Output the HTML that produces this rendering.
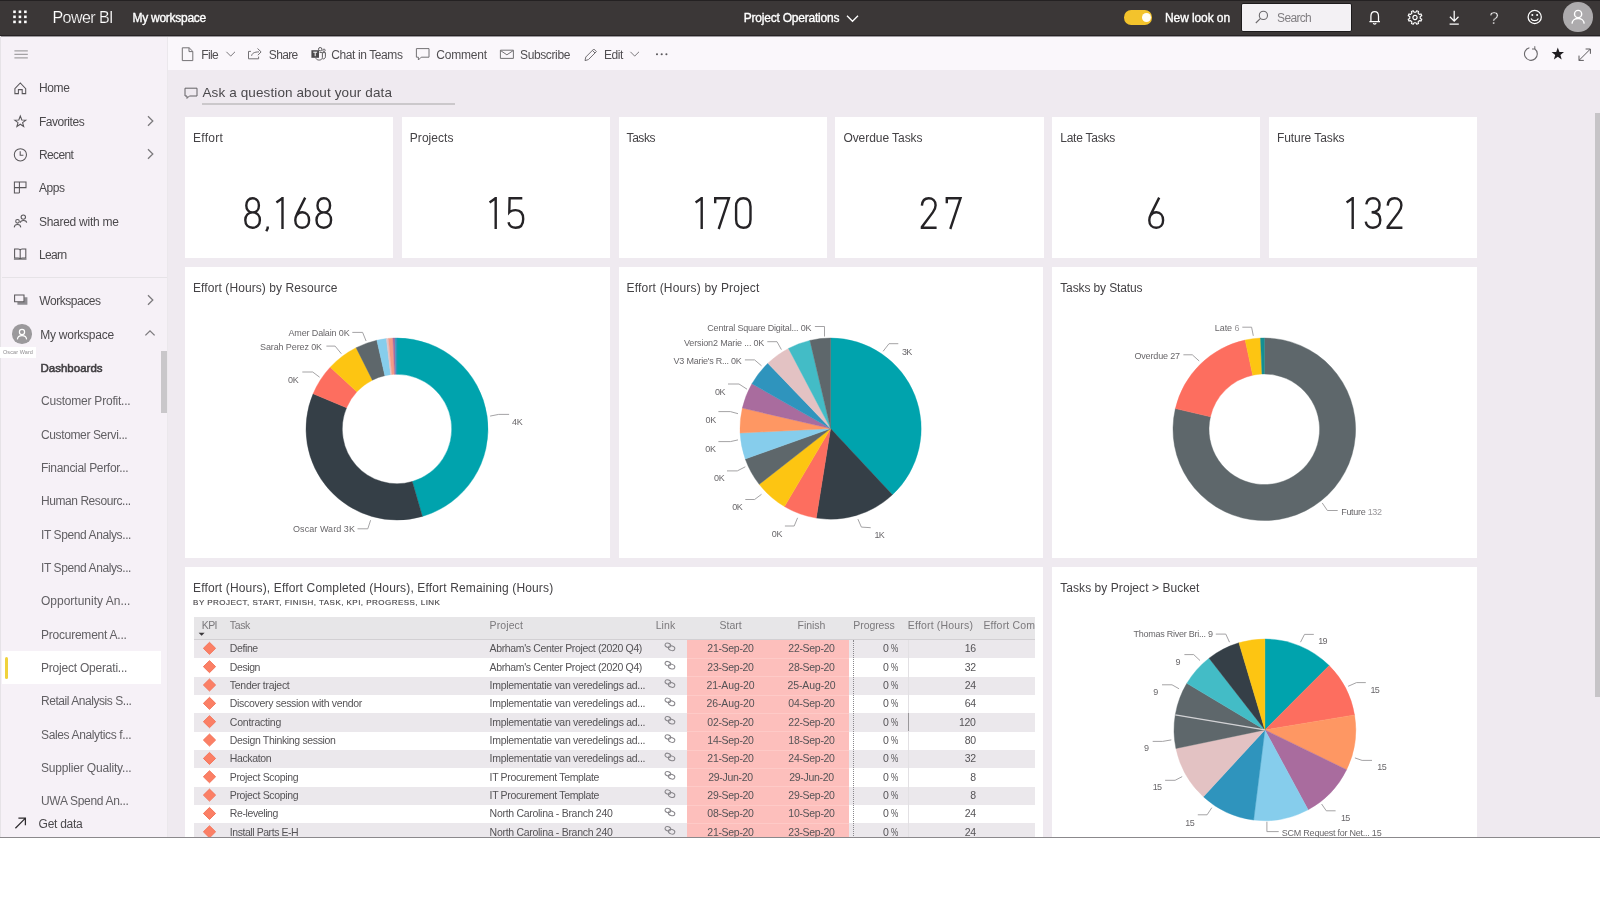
<!DOCTYPE html>
<html lang="en"><head><meta charset="utf-8"><title>Power BI - Project Operations</title>
<style>
html,body{margin:0;padding:0;background:#fff;}
body{width:1600px;height:900px;position:relative;overflow:hidden;font-family:"Liberation Sans",sans-serif;}
.t{position:absolute;white-space:nowrap;line-height:1;display:block;}
#w{position:absolute;left:0;top:0;width:1600px;height:900px;overflow:hidden;will-change:transform;}
.r{position:absolute;display:block;}
svg{overflow:visible;}
</style></head>
<body>
<div id="w">
<div class="r" style="left:0px;top:0px;width:1600px;height:838px;background:#efeaf0;"></div>
<div class="r" style="left:0px;top:36px;width:168px;height:802px;background:#f6f1f7;"></div>
<div class="r" style="left:167px;top:36px;width:1px;height:802px;background:#ebe8ec;"></div>
<div class="r" style="left:168px;top:36px;width:1432px;height:34px;background:#faf7fb;"></div>
<div class="r" style="left:0px;top:0px;width:1600px;height:36px;background:#3b3737;"></div>
<div class="r" style="left:0px;top:35px;width:1600px;height:1px;background:#262224;"></div>
<div class="r" style="left:0px;top:36px;width:1600px;height:1px;background:#9c999d;"></div>
<div class="r" style="left:0px;top:0px;width:1600px;height:1px;background:#242122;"></div>
<div class="r" style="left:0px;top:36px;width:1.3px;height:802px;background:#e6e3e7;"></div>
<div class="r" style="left:0px;top:837px;width:1600px;height:1.5px;background:#6e6c6f;"></div>
<svg class="r" style="left:0px;top:0px;" width="40" height="36" viewBox="0 0 40 36"><rect x="13.2" y="10.5" width="2.6" height="2.6" fill="#fff"/><rect x="13.2" y="15.55" width="2.6" height="2.6" fill="#fff"/><rect x="13.2" y="20.6" width="2.6" height="2.6" fill="#fff"/><rect x="18.64" y="10.5" width="2.6" height="2.6" fill="#fff"/><rect x="18.64" y="15.55" width="2.6" height="2.6" fill="#fff"/><rect x="18.64" y="20.6" width="2.6" height="2.6" fill="#fff"/><rect x="24.08" y="10.5" width="2.6" height="2.6" fill="#fff"/><rect x="24.08" y="15.55" width="2.6" height="2.6" fill="#fff"/><rect x="24.08" y="20.6" width="2.6" height="2.6" fill="#fff"/></svg>
<span class="t" style="left:53px;top:10px;font-size:16px;color:#fff;transform:translate(-0.50px,-0.07px);letter-spacing:-0.552px;-webkit-text-stroke:0.2px #3b3737;">Power BI</span>
<span class="t" style="left:133px;top:12px;font-size:12px;color:#fff;transform:translate(-0.50px,-0.30px);letter-spacing:-0.266px;-webkit-text-stroke:0.35px #fff;">My workspace</span>
<span class="t" style="left:744px;top:12px;font-size:12px;color:#fff;transform:translate(-0.20px,-0.40px);letter-spacing:-0.221px;-webkit-text-stroke:0.35px #fff;">Project Operations</span>
<svg class="r" style="left:845px;top:13px;" width="16" height="12" viewBox="0 0 16 12"><path d="M2,2.8 L7.5,8.3 L13,2.8" fill="none" stroke="#fff" stroke-width="1.3"/></svg>
<div class="r" style="left:1124.4px;top:10.2px;width:28px;height:14.4px;border-radius:7.2px;background:#f3c32c"></div>
<div class="r" style="left:1141.8px;top:12.9px;width:9px;height:9px;border-radius:50%;background:#fffdf5"></div>
<span class="t" style="left:1165px;top:12px;font-size:12px;color:#fff;transform:translate(0.00px,-0.30px);letter-spacing:-0.094px;-webkit-text-stroke:0.35px #fff;">New look on</span>
<div class="r" style="left:1240.5px;top:3px;width:111.5px;height:29px;background:#f3f1f4;border-radius:2px;box-sizing:border-box;border:1px solid #1d1b1c"></div>
<svg class="r" style="left:1252px;top:8px;" width="20" height="20" viewBox="0 0 20 20"><circle cx="11.4" cy="7.4" r="4.1" fill="none" stroke="#6b696c" stroke-width="1.1"/><path d="M8.5,10.3 L3.8,15" stroke="#6b696c" stroke-width="1.1"/></svg>
<span class="t" style="left:1277px;top:12px;font-size:12px;color:#807e81;transform:translate(0.10px,0.20px);letter-spacing:-0.687px;">Search</span>
<svg class="r" style="left:1366px;top:7.6px;" width="18" height="20" viewBox="0 0 18 20"><path d="M4.9,13.4 V8.2 C4.9,5.2 6.4,3.6 8.7,3.6 C11,3.6 12.5,5.2 12.5,8.2 V13.4 M3.4,13.5 H14 M7.3,15.2 C7.6,16.4 9.8,16.4 10.1,15.2" fill="none" stroke="#fff" stroke-width="1.25"/></svg>
<svg class="r" style="left:1404.5px;top:7px;" width="20" height="20" viewBox="0 0 20 20"><g transform="translate(10,10.5) rotate(22.5)" fill="none" stroke="#fff" stroke-linejoin="round"><path d="M-1.19,-5.16 L-0.97,-6.93 L0.97,-6.93 L1.19,-5.16 L2.81,-4.49 L4.21,-5.59 L5.59,-4.21 L4.49,-2.81 L5.16,-1.19 L6.93,-0.97 L6.93,0.97 L5.16,1.19 L4.49,2.81 L5.59,4.21 L4.21,5.59 L2.81,4.49 L1.19,5.16 L0.97,6.93 L-0.97,6.93 L-1.19,5.16 L-2.81,4.49 L-4.21,5.59 L-5.59,4.21 L-4.49,2.81 L-5.16,1.19 L-6.93,0.97 L-6.93,-0.97 L-5.16,-1.19 L-4.49,-2.81 L-5.59,-4.21 L-4.21,-5.59 L-2.81,-4.49 Z" stroke-width="1.15"/><circle r="2.1" stroke-width="1.2"/></g></svg>
<svg class="r" style="left:1445px;top:8px;" width="20" height="20" viewBox="0 0 20 20"><path d="M9.2,2.8 V13 M4.9,8.8 L9.2,13.1 L13.5,8.8 M4.6,16.2 H13.8" fill="none" stroke="#fff" stroke-width="1.25"/></svg>
<span class="t" style="left:1489px;top:10px;font-size:17px;color:#fff;transform:translate(0.27px,-0.01px);-webkit-text-stroke:0.45px #3b3737;">?</span>
<svg class="r" style="left:1525px;top:7px;" width="20" height="20" viewBox="0 0 20 20"><circle cx="9.7" cy="10" r="6.6" fill="none" stroke="#fff" stroke-width="1.25"/><circle cx="7.3" cy="8" r="1" fill="#fff"/><circle cx="12.1" cy="8" r="1" fill="#fff"/><path d="M6,11.4 C7.4,14.4 12,14.4 13.4,11.4" fill="none" stroke="#fff" stroke-width="1.2"/></svg>
<div class="r" style="left:1563.3px;top:2.4px;width:29.6px;height:29.6px;border-radius:50%;background:#adabad"></div>
<svg class="r" style="left:1566px;top:5px;" width="24" height="24" viewBox="0 0 24 24"><circle cx="12.1" cy="9" r="3.6" fill="none" stroke="#fff" stroke-width="1.4"/><path d="M6,18.6 C6.4,11.8 17.8,11.8 18.2,18.6" fill="none" stroke="#fff" stroke-width="1.4"/></svg>
<svg class="r" style="left:12px;top:46px;" width="20" height="16" viewBox="0 0 20 16"><path d="M2.4,4.9 H15.8 M2.4,8.4 H15.8 M2.4,11.9 H15.8" stroke="#a3a1a4" stroke-width="1.4"/></svg>
<svg class="r" style="left:180px;top:45px;" width="16" height="18" viewBox="0 0 16 18"><path d="M2.3,2.8 H9.2 L12.8,6.4 V15.6 H2.3 Z M9,2.9 V6.6 H12.7" fill="none" stroke="#737174" stroke-width="1"/></svg>
<span class="t" style="left:201px;top:48px;font-size:12px;color:#504e51;transform:translate(0.30px,0.50px);letter-spacing:-0.659px;">File</span>
<svg class="r" style="left:224px;top:48px;" width="14" height="12" viewBox="0 0 14 12"><path d="M2.4,3.8 L6.7,8.1 L11,3.8" fill="none" stroke="#7a787b" stroke-width="1"/></svg>
<svg class="r" style="left:246px;top:45px;" width="18" height="18" viewBox="0 0 18 18"><path d="M4.9,6.4 H2.5 V13.8 H12.6 V11.6 M5.6,10.8 C6,8.2 8.4,6.9 13,6.9 M11.5,3.5 L15.1,6.9 L11.9,10.2" fill="none" stroke="#737174" stroke-width="1"/></svg>
<span class="t" style="left:269px;top:48px;font-size:12px;color:#504e51;transform:translate(-0.20px,0.50px);letter-spacing:-0.664px;">Share</span>
<svg class="r" style="left:310px;top:46px;" width="17" height="17" viewBox="0 0 17 17"><rect x="1.4" y="4.2" width="7.6" height="7.6" fill="#4b494c"/><path d="M3.3,6.2 H7.1 M5.2,6.2 V10.2" stroke="#fff" stroke-width="1"/><circle cx="10.2" cy="3.2" r="1.7" fill="none" stroke="#4b494c" stroke-width="0.9"/><circle cx="14" cy="4.3" r="1.2" fill="none" stroke="#4b494c" stroke-width="0.8"/><path d="M9.6,6.4 H12.4 V11.4 C12.4,14.6 7.2,14.9 5.8,12.3 M12.9,6.6 H15.4 V10.8 C15.4,12.6 13.6,13.2 12.6,12.8" fill="none" stroke="#4b494c" stroke-width="0.9"/></svg>
<span class="t" style="left:331px;top:48px;font-size:12px;color:#504e51;transform:translate(0.30px,0.50px);letter-spacing:-0.406px;">Chat in Teams</span>
<svg class="r" style="left:414px;top:46px;" width="18" height="18" viewBox="0 0 18 18"><path d="M2.4,2.6 H15 V11.2 H7.2 L4.4,14 V11.2 H2.4 Z" fill="none" stroke="#737174" stroke-width="1"/></svg>
<span class="t" style="left:436px;top:48px;font-size:12px;color:#504e51;transform:translate(0.30px,0.50px);letter-spacing:-0.216px;">Comment</span>
<svg class="r" style="left:498px;top:46px;" width="18" height="16" viewBox="0 0 18 16"><path d="M2.4,4.2 H15.4 V12.4 H2.4 Z M2.6,4.6 L8.9,8.8 L15.2,4.6" fill="none" stroke="#737174" stroke-width="1"/></svg>
<span class="t" style="left:520px;top:48px;font-size:12px;color:#504e51;transform:translate(0.00px,0.50px);letter-spacing:-0.373px;">Subscribe</span>
<svg class="r" style="left:582px;top:46px;" width="18" height="18" viewBox="0 0 18 18"><path d="M3,14.6 L3.8,11 L11.8,3 L14.4,5.6 L6.4,13.6 Z M10.4,4.4 L13,7" fill="none" stroke="#737174" stroke-width="1"/></svg>
<span class="t" style="left:604px;top:48px;font-size:12px;color:#504e51;transform:translate(0.00px,0.50px);letter-spacing:-0.419px;">Edit</span>
<svg class="r" style="left:628.2px;top:48px;" width="14" height="12" viewBox="0 0 14 12"><path d="M2.4,3.8 L6.7,8.1 L11,3.8" fill="none" stroke="#7a787b" stroke-width="1"/></svg>
<svg class="r" style="left:652px;top:50px;" width="18" height="8" viewBox="0 0 18 8"><circle cx="5" cy="4.2" r="1.05" fill="#5a585b"/><circle cx="9.7" cy="4.2" r="1.05" fill="#5a585b"/><circle cx="14.4" cy="4.2" r="1.05" fill="#5a585b"/></svg>
<svg class="r" style="left:1522px;top:45px;" width="18" height="18" viewBox="0 0 18 18"><path d="M7.4,2.7 A6.4,6.4 0 1 0 12.6,3.7" fill="none" stroke="#6a686b" stroke-width="1.1"/><path d="M12.8,1.2 V4 H10" fill="none" stroke="#6a686b" stroke-width="1"/></svg>
<svg class="r" style="left:1550px;top:46px;" width="16" height="16" viewBox="0 0 16 16"><path d="M7.8,1.6 L9.4,6 L14,6.1 L10.4,8.9 L11.7,13.4 L7.8,10.8 L3.9,13.4 L5.2,8.9 L1.6,6.1 L6.2,6 Z" fill="#1f1d20"/></svg>
<svg class="r" style="left:1576px;top:46px;" width="18" height="18" viewBox="0 0 18 18"><path d="M3,14.4 L14.4,3 M9.6,3 H14.4 V7.8 M3,9.6 V14.4 H7.8" fill="none" stroke="#5c5a5d" stroke-width="1"/></svg>
<svg class="r" style="left:183px;top:86px;" width="16" height="14" viewBox="0 0 16 14"><path d="M2,2.2 H14 V10 H6.4 L4,12.4 V10 H2 Z" fill="none" stroke="#636164" stroke-width="1"/></svg>
<span class="t" style="left:203px;top:86px;font-size:13.5px;color:#4a484b;transform:translate(-0.50px,0.43px);letter-spacing:0.113px;">Ask a question about your data</span>
<div class="r" style="left:202px;top:103.3px;width:253px;height:1.6px;background:#cbc8cb;"></div>
<div class="r" style="left:1594.6px;top:112.5px;width:5.4px;height:584.2px;background:#c6c4c7;"></div>
<div class="r" style="left:2px;top:651px;width:158.5px;height:33px;background:#ffffff;"></div>
<div class="r" style="left:4.5px;top:656.5px;width:3px;height:22px;background:#f0d23c;border-radius:1.5px"></div>
<div class="r" style="left:160.5px;top:350.5px;width:6px;height:62px;background:#c9c7ca;"></div>
<div class="r" style="left:2px;top:277px;width:165px;height:1px;background:#e6e3e7;"></div>
<span class="t" style="left:39px;top:82px;font-size:12px;color:#4b494c;transform:translate(-0.10px,0.40px);letter-spacing:-0.327px;">Home</span>
<span class="t" style="left:39px;top:116px;font-size:12px;color:#4b494c;transform:translate(-0.10px,-0.30px);letter-spacing:-0.450px;">Favorites</span>
<span class="t" style="left:39px;top:149px;font-size:12px;color:#4b494c;letter-spacing:-0.620px;">Recent</span>
<span class="t" style="left:39px;top:182px;font-size:12px;color:#4b494c;transform:translate(-0.10px,0.30px);letter-spacing:-0.413px;">Apps</span>
<span class="t" style="left:39px;top:216px;font-size:12px;color:#4b494c;transform:translate(-0.10px,-0.30px);letter-spacing:-0.262px;">Shared with me</span>
<span class="t" style="left:39px;top:249px;font-size:12px;color:#4b494c;letter-spacing:-0.658px;">Learn</span>
<span class="t" style="left:39px;top:295px;font-size:12px;color:#4b494c;transform:translate(0.30px,-0.10px);letter-spacing:-0.460px;">Workspaces</span>
<span class="t" style="left:40px;top:328px;font-size:12px;color:#4b494c;transform:translate(0.30px,0.50px);letter-spacing:-0.266px;">My workspace</span>
<span class="t" style="left:40px;top:363px;font-size:11.5px;color:#3f3d40;transform:translate(0.40px,-0.38px);letter-spacing:0.019px;-webkit-text-stroke:0.55px #3f3d40;">Dashboards</span>
<span class="t" style="left:41px;top:395px;font-size:12px;color:#626064;transform:translate(0.00px,0.20px);letter-spacing:-0.220px;">Customer Profit...</span>
<span class="t" style="left:41px;top:429px;font-size:12px;color:#626064;transform:translate(0.00px,-0.45px);letter-spacing:-0.376px;">Customer Servi...</span>
<span class="t" style="left:41px;top:462px;font-size:12px;color:#626064;letter-spacing:-0.320px;">Financial Perfor...</span>
<span class="t" style="left:41px;top:495px;font-size:12px;color:#626064;transform:translate(0.00px,0.25px);letter-spacing:-0.438px;">Human Resourc...</span>
<span class="t" style="left:41px;top:529px;font-size:12px;color:#626064;transform:translate(0.00px,-0.40px);letter-spacing:-0.398px;">IT Spend Analys...</span>
<span class="t" style="left:41px;top:562px;font-size:12px;color:#626064;letter-spacing:-0.398px;">IT Spend Analys...</span>
<span class="t" style="left:41px;top:595px;font-size:12px;color:#626064;transform:translate(0.00px,0.30px);">Opportunity An...</span>
<span class="t" style="left:41px;top:629px;font-size:12px;color:#626064;transform:translate(0.00px,-0.35px);letter-spacing:-0.236px;">Procurement A...</span>
<span class="t" style="left:41px;top:662px;font-size:12px;color:#626064;letter-spacing:-0.213px;">Project Operati...</span>
<span class="t" style="left:41px;top:695px;font-size:12px;color:#626064;transform:translate(0.00px,0.35px);letter-spacing:-0.444px;">Retail Analysis S...</span>
<span class="t" style="left:41px;top:729px;font-size:12px;color:#626064;transform:translate(0.00px,-0.30px);letter-spacing:-0.359px;">Sales Analytics f...</span>
<span class="t" style="left:41px;top:762px;font-size:12px;color:#626064;letter-spacing:-0.175px;">Supplier Quality...</span>
<span class="t" style="left:41px;top:795px;font-size:12px;color:#626064;transform:translate(0.00px,0.40px);letter-spacing:-0.312px;">UWA Spend An...</span>
<div class="r" style="left:2px;top:806.5px;width:158px;height:31px;background:#f6f1f7;"></div>
<span class="t" style="left:39px;top:817px;font-size:12px;color:#4b494c;transform:translate(-0.40px,0.50px);letter-spacing:-0.266px;">Get data</span>
<svg class="r" style="left:12px;top:80px;" width="18" height="16" viewBox="0 0 18 16"><path d="M2.9,8.6 L8.3,3 L13.7,8.6 V13.6 H10.2 V9.6 H6.4 V13.6 H2.9 Z" fill="none" stroke="#59575a" stroke-width="1.05"/></svg>
<svg class="r" style="left:12px;top:113px;" width="18" height="17" viewBox="0 0 18 17"><path d="M8.3,3 L9.8,6.9 L13.8,7.1 L10.6,9.6 L11.7,13.5 L8.3,11.2 L4.9,13.5 L6,9.6 L2.8,7.1 L6.8,6.9 Z" fill="none" stroke="#59575a" stroke-width="1.05"/></svg>
<svg class="r" style="left:12px;top:146px;" width="18" height="18" viewBox="0 0 18 18"><circle cx="8.4" cy="8.8" r="6.1" fill="none" stroke="#59575a" stroke-width="1.05"/><path d="M8.2,5.2 V9.2 H11.4" fill="none" stroke="#59575a" stroke-width="1.05"/></svg>
<svg class="r" style="left:12px;top:179px;" width="18" height="18" viewBox="0 0 18 18"><path d="M2.4,3 H14 V8.6 H2.4 Z M7.4,3 V14 M2.4,8.6 V14 H7.4" fill="none" stroke="#59575a" stroke-width="1.05"/></svg>
<svg class="r" style="left:12px;top:213px;" width="18" height="18" viewBox="0 0 18 18"><circle cx="11.3" cy="4.1" r="2.2" fill="none" stroke="#59575a" stroke-width="1.05"/><path d="M8.3,9.8 C8.5,6.9 14.3,6.9 14.7,9.6" fill="none" stroke="#59575a" stroke-width="1.05"/><circle cx="5.5" cy="8.3" r="1.8" fill="none" stroke="#59575a" stroke-width="1.05"/><path d="M2.2,14.4 C2.6,10.5 8.4,10.5 8.8,14.4" fill="none" stroke="#59575a" stroke-width="1.05"/></svg>
<svg class="r" style="left:12px;top:246px;" width="18" height="18" viewBox="0 0 18 18"><path d="M2.6,2.9 H6.2 C7.4,2.9 8.2,3.5 8.2,4.5 V12.9 C8.2,12.3 7.4,11.9 6.2,11.9 H2.6 Z M13.8,2.9 H10.2 C9,2.9 8.2,3.5 8.2,4.5 V12.9 C8.2,12.3 9,11.9 10.2,11.9 H13.8 Z" fill="none" stroke="#59575a" stroke-width="1.05"/><path d="M1.9,13.1 H14.5" fill="none" stroke="#59575a" stroke-width="1.05"/></svg>
<svg class="r" style="left:12px;top:292px;" width="20" height="18" viewBox="0 0 20 18"><path d="M5.4,10 H12.2 V5.2 H15.4 V12.8 H5.4 Z" fill="#8f8d92"/><path d="M2.6,3 H12 V9.8 H2.6 Z" fill="#f6f1f7" stroke="#59575a" stroke-width="1.05"/></svg>
<div class="r" style="left:12.2px;top:324.3px;width:19.6px;height:19.6px;border-radius:50%;background:#9b999c"></div>
<svg class="r" style="left:12px;top:324px;" width="20" height="20" viewBox="0 0 20 20"><circle cx="10" cy="8" r="2.6" fill="none" stroke="#fff" stroke-width="1.2"/><path d="M5.4,15.4 C5.8,10.4 14.2,10.4 14.6,15.4" fill="none" stroke="#fff" stroke-width="1.2"/></svg>
<svg class="r" style="left:12px;top:815px;" width="18" height="16" viewBox="0 0 18 16"><path d="M3.4,13.2 L13.2,3.4 M6.4,3.2 H13.4 V10.2" fill="none" stroke="#2e2c2f" stroke-width="1.25"/></svg>
<svg class="r" style="left:144px;top:114.2px;" width="12" height="14" viewBox="0 0 12 14"><path d="M4,2.2 L8.8,7 L4,11.8" fill="none" stroke="#7c7a7d" stroke-width="1.3"/></svg>
<svg class="r" style="left:144px;top:147.4px;" width="12" height="14" viewBox="0 0 12 14"><path d="M4,2.2 L8.8,7 L4,11.8" fill="none" stroke="#7c7a7d" stroke-width="1.3"/></svg>
<svg class="r" style="left:144px;top:293.3px;" width="12" height="14" viewBox="0 0 12 14"><path d="M4,2.2 L8.8,7 L4,11.8" fill="none" stroke="#7c7a7d" stroke-width="1.3"/></svg>
<svg class="r" style="left:143px;top:327px;" width="14" height="12" viewBox="0 0 14 12"><path d="M2.4,8.4 L7,3.8 L11.6,8.4" fill="none" stroke="#7c7a7d" stroke-width="1.3"/></svg>
<div class="r" style="left:0px;top:346.5px;width:36px;height:11px;background:#ffffff;"></div>
<span class="t" style="left:3px;top:350px;font-size:5.5px;color:#8f8d90;transform:translate(0.00px,0.17px);letter-spacing:0.087px;">Oscar Ward</span>
<div class="r" style="left:185px;top:116.5px;width:208.3px;height:141.5px;background:#fff;"></div>
<div class="r" style="left:401.8px;top:116.5px;width:208.3px;height:141.5px;background:#fff;"></div>
<div class="r" style="left:618.6px;top:116.5px;width:208.3px;height:141.5px;background:#fff;"></div>
<div class="r" style="left:835.4px;top:116.5px;width:208.3px;height:141.5px;background:#fff;"></div>
<div class="r" style="left:1052.2px;top:116.5px;width:208.3px;height:141.5px;background:#fff;"></div>
<div class="r" style="left:1269px;top:116.5px;width:208.3px;height:141.5px;background:#fff;"></div>
<span class="t" style="left:193px;top:131px;font-size:12px;color:#444245;transform:translate(0.00px,0.50px);letter-spacing:0.257px;">Effort</span>
<span class="t" style="left:410px;top:131px;font-size:12px;color:#444245;transform:translate(-0.20px,0.50px);letter-spacing:0.044px;">Projects</span>
<span class="t" style="left:627px;top:131px;font-size:12px;color:#444245;transform:translate(-0.40px,0.50px);letter-spacing:-0.455px;">Tasks</span>
<span class="t" style="left:843px;top:131px;font-size:12px;color:#444245;transform:translate(0.40px,0.50px);letter-spacing:-0.055px;">Overdue Tasks</span>
<span class="t" style="left:1060px;top:131px;font-size:12px;color:#444245;transform:translate(0.20px,0.50px);letter-spacing:-0.235px;">Late Tasks</span>
<span class="t" style="left:1277px;top:131px;font-size:12px;color:#444245;transform:translate(0.00px,0.50px);letter-spacing:-0.081px;">Future Tasks</span>
<svg class="r" style="left:241.4px;top:194px;" width="96.2" height="42" viewBox="0 0 96.2 42"><g fill="none" stroke="#252326" stroke-width="2.4" stroke-linejoin="miter" stroke-miterlimit="6"><path transform="translate(3.00,3)" d="M8.6,15.4 C4.7,15.4 2.3,12.6 2.3,8.4 C2.3,4.2 4.7,1.3 8.6,1.3 C12.5,1.3 14.9,4.2 14.9,8.4 C14.9,12.6 12.5,15.4 8.6,15.4 C4.2,15.4 1.3,18.4 1.3,23 C1.3,27.8 4.2,30.7 8.6,30.7 C13,30.7 15.9,27.8 15.9,23 C15.9,18.4 13,15.4 8.6,15.4 Z"/><path transform="translate(24.20,3)" d="M2.5,29.6 V31.3 L1.1,34.2"/><path transform="translate(34.80,3)" d="M6.7,0 V32 M0.6,5.5 L6.2,1.5"/><path transform="translate(53.00,3)" d="M11.2,0.6 L3.2,16.6 C1.9,19.2 1.3,21 1.3,23.2 C1.3,27.8 4,30.7 8.2,30.7 C12.4,30.7 15.1,27.8 15.1,23.2 C15.1,18.4 12.4,15.3 8.4,15.3 C6,15.3 4.2,16.3 2.9,18"/><path transform="translate(74.20,3)" d="M8.6,15.4 C4.7,15.4 2.3,12.6 2.3,8.4 C2.3,4.2 4.7,1.3 8.6,1.3 C12.5,1.3 14.9,4.2 14.9,8.4 C14.9,12.6 12.5,15.4 8.6,15.4 C4.2,15.4 1.3,18.4 1.3,23 C1.3,27.8 4.2,30.7 8.6,30.7 C13,30.7 15.9,27.8 15.9,23 C15.9,18.4 13,15.4 8.6,15.4 Z"/></g></svg>
<svg class="r" style="left:486.3px;top:194px;" width="43.3" height="42" viewBox="0 0 43.3 42"><g fill="none" stroke="#252326" stroke-width="2.4" stroke-linejoin="miter" stroke-miterlimit="6"><path transform="translate(3.00,3)" d="M6.7,0 V32 M0.6,5.5 L6.2,1.5"/><path transform="translate(21.30,3)" d="M15,1.3 H2.3 L2,15.3 C3.4,13.8 5.7,13.1 8.3,13.1 C13.1,13.1 15.9,16.2 15.9,21.9 C15.9,27.6 13.1,30.7 8.3,30.7 C4.4,30.7 1.9,28.7 1.2,25.2"/></g></svg>
<svg class="r" style="left:692.2px;top:194px;" width="64.8" height="42" viewBox="0 0 64.8 42"><g fill="none" stroke="#252326" stroke-width="2.4" stroke-linejoin="miter" stroke-miterlimit="6"><path transform="translate(3.00,3)" d="M6.7,0 V32 M0.6,5.5 L6.2,1.5"/><path transform="translate(21.50,3)" d="M1.7,6.2 V1.3 H15.4 L5.2,32"/><path transform="translate(42.80,3)" d="M1.3,9.6 C1.3,4 4.1,1.3 8.5,1.3 C12.9,1.3 15.7,4 15.7,9.6 V22.4 C15.7,28 12.9,30.7 8.5,30.7 C4.1,30.7 1.3,28 1.3,22.4 Z"/></g></svg>
<svg class="r" style="left:916.5px;top:194px;" width="50.1" height="42" viewBox="0 0 50.1 42"><g fill="none" stroke="#252326" stroke-width="2.4" stroke-linejoin="miter" stroke-miterlimit="6"><path transform="translate(3.00,3)" d="M1.9,8.6 C2.3,3.6 5,1.3 8.7,1.3 C12.7,1.3 15.6,3.9 15.6,8.2 C15.6,11 14.6,13 12.8,15.4 L1.9,30 V30.7 H16.6"/><path transform="translate(28.10,3)" d="M1.7,6.2 V1.3 H15.4 L5.2,32"/></g></svg>
<svg class="r" style="left:1144.6px;top:194px;" width="25" height="42" viewBox="0 0 25 42"><g fill="none" stroke="#252326" stroke-width="2.4" stroke-linejoin="miter" stroke-miterlimit="6"><path transform="translate(3.00,3)" d="M11.2,0.6 L3.2,16.6 C1.9,19.2 1.3,21 1.3,23.2 C1.3,27.8 4,30.7 8.2,30.7 C12.4,30.7 15.1,27.8 15.1,23.2 C15.1,18.4 12.4,15.3 8.4,15.3 C6,15.3 4.2,16.3 2.9,18"/></g></svg>
<svg class="r" style="left:1342.8px;top:194px;" width="64.8" height="42" viewBox="0 0 64.8 42"><g fill="none" stroke="#252326" stroke-width="2.4" stroke-linejoin="miter" stroke-miterlimit="6"><path transform="translate(3.00,3)" d="M6.7,0 V32 M0.6,5.5 L6.2,1.5"/><path transform="translate(21.40,3)" d="M1.9,7.4 C2.6,3.4 5.1,1.3 8.6,1.3 C12.6,1.3 15.2,3.8 15.2,8 C15.2,12.4 12.4,15.2 7.2,15.2 C12.8,15.2 15.9,18 15.9,23 C15.9,27.8 13,30.7 8.6,30.7 C4.6,30.7 2,28.6 1.3,24.6"/><path transform="translate(42.80,3)" d="M1.9,8.6 C2.3,3.6 5,1.3 8.7,1.3 C12.7,1.3 15.6,3.9 15.6,8.2 C15.6,11 14.6,13 12.8,15.4 L1.9,30 V30.7 H16.6"/></g></svg>
<div class="r" style="left:185px;top:266.8px;width:425px;height:291.4px;background:#fff;"></div>
<div class="r" style="left:618.6px;top:266.8px;width:424.8px;height:291.4px;background:#fff;"></div>
<div class="r" style="left:1052.2px;top:266.8px;width:425px;height:291.4px;background:#fff;"></div>
<div class="r" style="left:185px;top:567px;width:858.4px;height:271px;background:#fff;"></div>
<div class="r" style="left:1052.2px;top:567px;width:425px;height:271px;background:#fff;"></div>
<span class="t" style="left:193px;top:282px;font-size:12px;color:#444245;transform:translate(0.00px,-0.40px);letter-spacing:0.077px;">Effort (Hours) by Resource</span>
<span class="t" style="left:627px;top:282px;font-size:12px;color:#444245;transform:translate(-0.40px,-0.40px);letter-spacing:0.177px;">Effort (Hours) by Project</span>
<span class="t" style="left:1060px;top:282px;font-size:12px;color:#444245;transform:translate(0.20px,-0.40px);letter-spacing:-0.116px;">Tasks by Status</span>
<span class="t" style="left:1060px;top:582px;font-size:12px;color:#444245;transform:translate(0.20px,-0.10px);letter-spacing:0.063px;">Tasks by Project &gt; Bucket</span>
<svg class="r" style="left:300.1px;top:332.3px;" width="194" height="194" viewBox="0 0 194 194"><path d="M97.00,6.00 A91,91 0 0 1 122.39,184.39 L112.26,149.53 A54.7,54.7 0 0 0 97.00,42.30 Z" fill="#00a3ad" stroke="#00a3ad" stroke-width="0.4"/><path d="M122.39,184.39 A91,91 0 0 1 13.11,61.74 L46.57,75.80 A54.7,54.7 0 0 0 112.26,149.53 Z" fill="#353f47" stroke="#353f47" stroke-width="0.4"/><path d="M13.11,61.74 A91,91 0 0 1 30.23,35.17 L56.86,59.83 A54.7,54.7 0 0 0 46.57,75.80 Z" fill="#fd6e5f" stroke="#fd6e5f" stroke-width="0.4"/><path d="M30.23,35.17 A91,91 0 0 1 56.11,15.70 L72.42,48.13 A54.7,54.7 0 0 0 56.86,59.83 Z" fill="#fdc512" stroke="#fdc512" stroke-width="0.4"/><path d="M56.11,15.70 A91,91 0 0 1 76.84,8.26 L84.88,43.66 A54.7,54.7 0 0 0 72.42,48.13 Z" fill="#5e676b" stroke="#5e676b" stroke-width="0.4"/><path d="M76.84,8.26 A91,91 0 0 1 86.38,6.62 L90.62,42.67 A54.7,54.7 0 0 0 84.88,43.66 Z" fill="#86cdec" stroke="#86cdec" stroke-width="0.4"/><path d="M86.38,6.62 A91,91 0 0 1 88.44,6.40 L91.85,42.54 A54.7,54.7 0 0 0 90.62,42.67 Z" fill="#e3c2c3" stroke="#e3c2c3" stroke-width="0.4"/><path d="M88.44,6.40 A91,91 0 0 1 92.87,6.09 L94.52,42.36 A54.7,54.7 0 0 0 91.85,42.54 Z" fill="#f39a86" stroke="#f39a86" stroke-width="0.4"/><path d="M92.87,6.09 A91,91 0 0 1 95.09,6.02 L95.85,42.31 A54.7,54.7 0 0 0 94.52,42.36 Z" fill="#a96c9e" stroke="#a96c9e" stroke-width="0.4"/><path d="M95.09,6.02 A91,91 0 0 1 97.00,6.00 L97.00,42.30 A54.7,54.7 0 0 0 95.85,42.31 Z" fill="#2f94bd" stroke="#2f94bd" stroke-width="0.4"/></svg>
<svg class="r" style="left:733.8px;top:332.2px;" width="193.2" height="193.2" viewBox="0 0 193.2 193.2"><path d="M96.60,96.60 L96.60,6.00 A90.6,90.6 0 0 1 158.39,162.86 Z" fill="#00a3ad" stroke="#00a3ad" stroke-width="0.4"/><path d="M96.60,96.60 L158.39,162.86 A90.6,90.6 0 0 1 82.27,186.06 Z" fill="#353f47" stroke="#353f47" stroke-width="0.4"/><path d="M96.60,96.60 L82.27,186.06 A90.6,90.6 0 0 1 50.48,174.58 Z" fill="#fd6e5f" stroke="#fd6e5f" stroke-width="0.4"/><path d="M96.60,96.60 L50.48,174.58 A90.6,90.6 0 0 1 25.21,152.38 Z" fill="#fdc512" stroke="#fdc512" stroke-width="0.4"/><path d="M96.60,96.60 L25.21,152.38 A90.6,90.6 0 0 1 11.25,126.99 Z" fill="#5e676b" stroke="#5e676b" stroke-width="0.4"/><path d="M96.60,96.60 L11.25,126.99 A90.6,90.6 0 0 1 6.11,101.03 Z" fill="#86cdec" stroke="#86cdec" stroke-width="0.4"/><path d="M96.60,96.60 L6.11,101.03 A90.6,90.6 0 0 1 8.36,76.07 Z" fill="#fe9763" stroke="#fe9763" stroke-width="0.4"/><path d="M96.60,96.60 L8.36,76.07 A90.6,90.6 0 0 1 17.90,51.71 Z" fill="#a96c9e" stroke="#a96c9e" stroke-width="0.4"/><path d="M96.60,96.60 L17.90,51.71 A90.6,90.6 0 0 1 33.89,31.21 Z" fill="#2f94bd" stroke="#2f94bd" stroke-width="0.4"/><path d="M96.60,96.60 L33.89,31.21 A90.6,90.6 0 0 1 54.49,16.38 Z" fill="#e3c2c3" stroke="#e3c2c3" stroke-width="0.4"/><path d="M96.60,96.60 L54.49,16.38 A90.6,90.6 0 0 1 75.91,8.39 Z" fill="#43bcc6" stroke="#43bcc6" stroke-width="0.4"/><path d="M96.60,96.60 L75.91,8.39 A90.6,90.6 0 0 1 96.60,6.00 Z" fill="#5e676b" stroke="#5e676b" stroke-width="0.4"/></svg>
<svg class="r" style="left:1167px;top:331.7px;" width="194.6" height="194.6" viewBox="0 0 194.6 194.6"><path d="M97.30,6.00 A91.3,91.3 0 1 1 8.38,76.61 L43.44,84.77 A55.3,55.3 0 1 0 97.30,42.00 Z" fill="#5e676b" stroke="#5e676b" stroke-width="0.4"/><path d="M8.38,76.61 A91.3,91.3 0 0 1 78.16,8.03 L85.71,43.23 A55.3,55.3 0 0 0 43.44,84.77 Z" fill="#fd6e5f" stroke="#fd6e5f" stroke-width="0.4"/><path d="M78.16,8.03 A91.3,91.3 0 0 1 93.48,6.08 L94.98,42.05 A55.3,55.3 0 0 0 85.71,43.23 Z" fill="#fdc512" stroke="#fdc512" stroke-width="0.4"/><path d="M93.48,6.08 A91.3,91.3 0 0 1 97.30,6.00 L97.30,42.00 A55.3,55.3 0 0 0 94.98,42.05 Z" fill="#148f93" stroke="#148f93" stroke-width="0.4"/></svg>
<svg class="r" style="left:1167.6px;top:632.5px;" width="193.8" height="193.8" viewBox="0 0 193.8 193.8"><path d="M96.90,96.90 L96.90,6.00 A90.9,90.9 0 0 1 161.18,32.62 Z" fill="#00a3ad" stroke="#00a3ad" stroke-width="0.4"/><path d="M96.90,96.90 L161.18,32.62 A90.9,90.9 0 0 1 186.55,81.90 Z" fill="#fd6e5f" stroke="#fd6e5f" stroke-width="0.4"/><path d="M96.90,96.90 L186.55,81.90 A90.9,90.9 0 0 1 178.60,136.75 Z" fill="#fe9763" stroke="#fe9763" stroke-width="0.4"/><path d="M96.90,96.90 L178.60,136.75 A90.9,90.9 0 0 1 140.13,176.86 Z" fill="#a96c9e" stroke="#a96c9e" stroke-width="0.4"/><path d="M96.90,96.90 L140.13,176.86 A90.9,90.9 0 0 1 85.66,187.10 Z" fill="#86cdec" stroke="#86cdec" stroke-width="0.4"/><path d="M96.90,96.90 L85.66,187.10 A90.9,90.9 0 0 1 35.37,163.81 Z" fill="#2f94bd" stroke="#2f94bd" stroke-width="0.4"/><path d="M96.90,96.90 L35.37,163.81 A90.9,90.9 0 0 1 7.92,115.49 Z" fill="#e3c2c3" stroke="#e3c2c3" stroke-width="0.4"/><path d="M96.90,96.90 L7.92,115.49 A90.9,90.9 0 0 1 7.25,81.90 Z" fill="#5e676b" stroke="#5e676b" stroke-width="0.4"/><path d="M96.90,96.90 L7.25,81.90 A90.9,90.9 0 0 1 18.82,50.36 Z" fill="#5e676b" stroke="#5e676b" stroke-width="0.4"/><path d="M96.90,96.90 L18.82,50.36 A90.9,90.9 0 0 1 41.06,25.17 Z" fill="#43bcc6" stroke="#43bcc6" stroke-width="0.4"/><path d="M96.90,96.90 L41.06,25.17 A90.9,90.9 0 0 1 70.93,9.79 Z" fill="#353f47" stroke="#353f47" stroke-width="0.4"/><path d="M96.90,96.90 L70.93,9.79 A90.9,90.9 0 0 1 96.90,6.00 Z" fill="#fdc512" stroke="#fdc512" stroke-width="0.4"/><path d="M96.9,96.9 L7.25,81.90" stroke="#d2d2d5" stroke-width="1.4"/></svg>
<svg class="r" style="left:0px;top:0px;" width="1600" height="838" viewBox="0 0 1600 838"><g fill="none" stroke="#9a989b" stroke-width="0.9"><path d="M352.3,332.4 L362.6,332.4 L366.1,341.0"/><path d="M326.4,346.1 L335.1,346.1 L341.3,353.7"/><path d="M302.3,372.0 L312.7,372.0 L319.6,377.2"/><path d="M490.1,416.1 L498.7,414.4 L509.1,414.4"/><path d="M357.5,528.8 L367.8,528.8 L370.6,520.2"/><path d="M814.9,326.5 L824.5,326.5 L824.5,336.5"/><path d="M767.3,341.7 L777.0,341.7 L781.4,349.6"/><path d="M744.9,359.9 L754.6,359.9 L761.5,365.8"/><path d="M728.0,384.0 L739.0,384.0 L747.0,389.2"/><path d="M718.4,411.6 L730.4,411.6 L738.0,413.7"/><path d="M718.4,441.6 L730.4,441.6 L738.0,439.9"/><path d="M727.0,470.9 L737.3,470.9 L745.3,466.8"/><path d="M745.3,499.5 L754.6,499.5 L761.5,494.3"/><path d="M784.9,526.0 L794.2,526.0 L797.6,517.8"/><path d="M857.9,519.1 L861.4,527.1 L870.7,527.7"/><path d="M883.1,351.3 L889.0,343.7 L898.3,343.7"/><path d="M1242.3,327.2 L1251.6,327.2 L1253.3,335.8"/><path d="M1183.4,354.8 L1192.3,354.8 L1199.2,361.0"/><path d="M1322.2,502.9 L1327.4,510.5 L1337.7,510.5"/><path d="M1215.8,634.1 L1225.8,634.1 L1229.5,642.2"/><path d="M1184.4,654.6 L1193.7,654.6 L1200.0,660.5"/><path d="M1162.0,684.8 L1172.0,684.8 L1179.1,688.8"/><path d="M1152.7,741.4 L1162.6,741.4 L1171.3,739.9"/><path d="M1165.1,780.3 L1175.1,780.3 L1182.2,776.6"/><path d="M1197.8,814.8 L1207.1,814.8 L1211.8,807.7"/><path d="M1266.9,821.7 L1266.9,831.6 L1278.7,831.6"/><path d="M1321.6,804.0 L1326.3,810.8 L1335.6,810.8"/><path d="M1354.9,757.9 L1362.1,760.4 L1372.0,760.4"/><path d="M1348.1,686.3 L1356.5,682.6 L1365.8,682.6"/><path d="M1300.5,642.2 L1304.5,634.4 L1313.8,634.4"/></g></svg>
<span class="t" style="left:289px;top:329px;font-size:9px;color:#69676a;transform:translate(-0.50px,0.22px);letter-spacing:-0.145px;">Amer Dalain </span>
<span class="t" style="left:339px;top:329px;font-size:9px;color:#69676a;transform:translate(-0.22px,0.22px);letter-spacing:-0.145px;">0K</span>
<span class="t" style="left:260px;top:343px;font-size:9px;color:#69676a;transform:translate(0.00px,0.22px);letter-spacing:-0.110px;">Sarah Perez </span>
<span class="t" style="left:311px;top:343px;font-size:9px;color:#69676a;transform:translate(0.21px,0.22px);letter-spacing:-0.110px;">0K</span>
<span class="t" style="left:288px;top:376px;font-size:9px;color:#69676a;transform:translate(0.00px,-0.28px);letter-spacing:-0.255px;">0K</span>
<span class="t" style="left:512px;top:418px;font-size:9px;color:#69676a;transform:translate(0.00px,-0.28px);letter-spacing:-0.255px;">4K</span>
<span class="t" style="left:293px;top:525px;font-size:9px;color:#69676a;transform:translate(0.00px,-0.28px);letter-spacing:0.063px;">Oscar Ward </span>
<span class="t" style="left:344px;top:525px;font-size:9px;color:#69676a;transform:translate(-0.14px,-0.28px);letter-spacing:0.063px;">3K</span>
<span class="t" style="left:707px;top:324px;font-size:9px;color:#69676a;transform:translate(0.30px,0.12px);letter-spacing:-0.177px;">Central Square Digital... </span>
<span class="t" style="left:801px;top:324px;font-size:9px;color:#69676a;transform:translate(-0.26px,0.12px);letter-spacing:-0.177px;">0K</span>
<span class="t" style="left:684px;top:339px;font-size:9px;color:#69676a;letter-spacing:-0.155px;">Version2 Marie ... </span>
<span class="t" style="left:753px;top:339px;font-size:9px;color:#69676a;transform:translate(0.50px,-0.08px);letter-spacing:-0.155px;">0K</span>
<span class="t" style="left:674px;top:357px;font-size:9px;color:#69676a;transform:translate(-0.40px,0.22px);letter-spacing:-0.241px;">V3 Marie's R... </span>
<span class="t" style="left:731px;top:357px;font-size:9px;color:#69676a;transform:translate(-0.03px,0.22px);letter-spacing:-0.241px;">0K</span>
<span class="t" style="left:715px;top:388px;font-size:9px;color:#69676a;transform:translate(-0.10px,0.22px);letter-spacing:-0.305px;">0K</span>
<span class="t" style="left:706px;top:416px;font-size:9px;color:#69676a;transform:translate(-0.40px,-0.28px);letter-spacing:-0.305px;">0K</span>
<span class="t" style="left:705px;top:445px;font-size:9px;color:#69676a;transform:translate(0.30px,0.02px);letter-spacing:-0.355px;">0K</span>
<span class="t" style="left:714px;top:474px;font-size:9px;color:#69676a;letter-spacing:-0.355px;">0K</span>
<span class="t" style="left:732px;top:503px;font-size:9px;color:#69676a;transform:translate(0.20px,-0.38px);letter-spacing:-0.355px;">0K</span>
<span class="t" style="left:772px;top:530px;font-size:9px;color:#69676a;transform:translate(-0.20px,-0.48px);letter-spacing:-0.355px;">0K</span>
<span class="t" style="left:875px;top:531px;font-size:9px;color:#69676a;transform:translate(-0.50px,-0.18px);letter-spacing:-0.855px;">1K</span>
<span class="t" style="left:902px;top:348px;font-size:9px;color:#69676a;transform:translate(0.00px,-0.48px);letter-spacing:-0.805px;">3K</span>
<span class="t" style="left:1215px;top:324px;font-size:9px;color:#69676a;transform:translate(-0.30px,0.12px);letter-spacing:-0.037px;">Late </span>
<span class="t" style="left:1235px;top:324px;font-size:9px;color:#99979a;transform:translate(-0.47px,0.12px);letter-spacing:-0.037px;">6</span>
<span class="t" style="left:1134px;top:352px;font-size:9px;color:#69676a;transform:translate(0.40px,0.02px);letter-spacing:-0.153px;">Overdue </span>
<span class="t" style="left:1170px;top:352px;font-size:9px;color:#69676a;transform:translate(0.19px,0.02px);letter-spacing:-0.153px;">27</span>
<span class="t" style="left:1341px;top:508px;font-size:9px;color:#69676a;transform:translate(0.20px,-0.18px);letter-spacing:-0.293px;">Future </span>
<span class="t" style="left:1368px;top:508px;font-size:9px;color:#99979a;transform:translate(-0.34px,-0.18px);letter-spacing:-0.293px;">132</span>
<span class="t" style="left:1133px;top:630px;font-size:9px;color:#69676a;transform:translate(0.40px,0.32px);letter-spacing:-0.249px;">Thomas River Bri... </span>
<span class="t" style="left:1208px;top:630px;font-size:9px;color:#69676a;transform:translate(-0.06px,0.32px);letter-spacing:-0.249px;">9</span>
<span class="t" style="left:1175px;top:658px;font-size:9px;color:#69676a;transform:translate(0.40px,-0.28px);letter-spacing:0.294px;">9</span>
<span class="t" style="left:1153px;top:688px;font-size:9px;color:#69676a;transform:translate(0.30px,0.22px);letter-spacing:0.594px;">9</span>
<span class="t" style="left:1144px;top:744px;font-size:9px;color:#69676a;transform:translate(0.00px,-0.18px);letter-spacing:0.594px;">9</span>
<span class="t" style="left:1153px;top:783px;font-size:9px;color:#69676a;transform:translate(-0.30px,0.02px);letter-spacing:-0.656px;">15</span>
<span class="t" style="left:1185px;top:819px;font-size:9px;color:#69676a;transform:translate(0.30px,-0.48px);letter-spacing:-0.606px;">15</span>
<span class="t" style="left:1282px;top:829px;font-size:9px;color:#69676a;transform:translate(-0.20px,-0.18px);letter-spacing:-0.238px;">SCM Request for Net... </span>
<span class="t" style="left:1372px;top:829px;font-size:9px;color:#69676a;transform:translate(-0.14px,-0.18px);letter-spacing:-0.238px;">15</span>
<span class="t" style="left:1341px;top:814px;font-size:9px;color:#69676a;transform:translate(-0.10px,-0.18px);letter-spacing:-0.656px;">15</span>
<span class="t" style="left:1377px;top:763px;font-size:9px;color:#69676a;transform:translate(0.30px,0.42px);letter-spacing:-0.656px;">15</span>
<span class="t" style="left:1371px;top:686px;font-size:9px;color:#69676a;transform:translate(-0.50px,-0.28px);letter-spacing:-0.656px;">15</span>
<span class="t" style="left:1318px;top:637px;font-size:9px;color:#69676a;transform:translate(0.20px,0.42px);letter-spacing:-0.656px;">19</span>
<span class="t" style="left:193px;top:582px;font-size:12px;color:#444245;letter-spacing:0.144px;">Effort (Hours), Effort Completed (Hours), Effort Remaining (Hours)</span>
<span class="t" style="left:193px;top:599px;font-size:8px;color:#4a484b;transform:translate(0.10px,0.26px);letter-spacing:0.470px;-webkit-text-stroke:0.15px #4a484b;">BY PROJECT, START, FINISH, TASK, KPI, PROGRESS, LINK</span>
<div class="r" style="left:194px;top:617.2px;width:841.3px;height:22.3px;background:#e7e6e8;"></div>
<div class="r" style="left:194px;top:639.2px;width:841.3px;height:0.8px;background:#d2d0d3;"></div>
<div class="r" style="left:194px;top:639.8px;width:841.3px;height:18.35px;background:#ebe8ec;"></div>
<div class="r" style="left:194px;top:676.5px;width:841.3px;height:18.35px;background:#ebe8ec;"></div>
<div class="r" style="left:194px;top:713.2px;width:841.3px;height:18.35px;background:#ebe8ec;"></div>
<div class="r" style="left:194px;top:749.9px;width:841.3px;height:18.35px;background:#ebe8ec;"></div>
<div class="r" style="left:194px;top:786.6px;width:841.3px;height:18.35px;background:#ebe8ec;"></div>
<div class="r" style="left:194px;top:823.3px;width:841.3px;height:14.7px;background:#ebe8ec;"></div>
<div class="r" style="left:687.2px;top:639.8px;width:161.8px;height:198.2px;background:#fdbfbc;"></div>
<div class="r" style="left:687.2px;top:657.85px;width:161.8px;height:0.7px;background:#fecac7;"></div>
<div class="r" style="left:687.2px;top:676.2px;width:161.8px;height:0.7px;background:#fecac7;"></div>
<div class="r" style="left:687.2px;top:694.55px;width:161.8px;height:0.7px;background:#fecac7;"></div>
<div class="r" style="left:687.2px;top:712.9px;width:161.8px;height:0.7px;background:#fecac7;"></div>
<div class="r" style="left:687.2px;top:731.25px;width:161.8px;height:0.7px;background:#fecac7;"></div>
<div class="r" style="left:687.2px;top:749.6px;width:161.8px;height:0.7px;background:#fecac7;"></div>
<div class="r" style="left:687.2px;top:767.95px;width:161.8px;height:0.7px;background:#fecac7;"></div>
<div class="r" style="left:687.2px;top:786.3px;width:161.8px;height:0.7px;background:#fecac7;"></div>
<div class="r" style="left:687.2px;top:804.65px;width:161.8px;height:0.7px;background:#fecac7;"></div>
<div class="r" style="left:687.2px;top:823px;width:161.8px;height:0.7px;background:#fecac7;"></div>
<div class="r" style="left:853.2px;top:639.8px;width:0;height:198px;border-left:1px dotted #8a888d"></div>
<div class="r" style="left:908.3px;top:639.8px;width:0.8px;height:198px;background:#e2e0e3;"></div>
<div class="r" style="left:908.1px;top:712.5px;width:1.2px;height:18px;background:#9a989b;"></div>
<span class="t" style="left:202px;top:620px;font-size:10.5px;color:#7b797c;transform:translate(-0.20px,0.46px);letter-spacing:-0.675px;">KPI</span>
<svg class="r" style="left:198px;top:631.5px;" width="8" height="5" viewBox="0 0 8 5"><path d="M0.6,0.8 H6.6 L3.6,3.8 Z" fill="#3a383b"/></svg>
<span class="t" style="left:230px;top:620px;font-size:10.5px;color:#7b797c;transform:translate(-0.20px,0.46px);letter-spacing:-0.347px;">Task</span>
<span class="t" style="left:490px;top:620px;font-size:10.5px;color:#7b797c;transform:translate(-0.40px,0.46px);letter-spacing:0.089px;">Project</span>
<span class="t" style="left:656px;top:620px;font-size:10.5px;color:#7b797c;transform:translate(-0.30px,0.46px);letter-spacing:0.085px;">Link</span>
<span class="t" style="left:720px;top:620px;font-size:10.5px;color:#7b797c;transform:translate(-0.50px,0.46px);letter-spacing:-0.015px;">Start</span>
<span class="t" style="left:798px;top:620px;font-size:10.5px;color:#7b797c;transform:translate(-0.40px,0.46px);letter-spacing:-0.051px;">Finish</span>
<span class="t" style="left:853px;top:620px;font-size:10.5px;color:#7b797c;transform:translate(0.30px,0.46px);letter-spacing:-0.077px;">Progress</span>
<span class="t" style="left:908px;top:620px;font-size:10.5px;color:#7b797c;transform:translate(-0.20px,0.46px);letter-spacing:0.177px;">Effort (Hours)</span>
<span class="t" style="left:983px;top:620px;font-size:10.5px;color:#7b797c;transform:translate(0.40px,0.46px);letter-spacing:0.191px;">Effort Com</span>
<span class="t" style="left:230px;top:643px;font-size:10.5px;color:#555356;transform:translate(-0.20px,0.16px);letter-spacing:-0.392px;">Define</span>
<span class="t" style="left:490px;top:643px;font-size:10.5px;color:#555356;transform:translate(-0.40px,0.16px);letter-spacing:-0.359px;">Abrham's Center Project (2020 Q4)</span>
<span class="t" style="left:707px;top:643px;font-size:10.5px;color:#555356;transform:translate(0.35px,0.16px);letter-spacing:-0.304px;">21-Sep-20</span>
<span class="t" style="left:788px;top:643px;font-size:10.5px;color:#555356;transform:translate(0.35px,0.16px);letter-spacing:-0.304px;">22-Sep-20</span>
<span class="t" style="left:883px;top:643px;font-size:10.5px;color:#555356;transform:translate(-0.10px,0.16px);letter-spacing:-0.140px;">0</span>
<span class="t" style="left:891px;top:643px;font-size:10.5px;color:#555356;transform-origin:0 50%;transform:scaleX(0.78);">%</span>
<span class="t" style="left:965px;top:643px;font-size:10.5px;color:#555356;transform:translate(-0.30px,0.16px);letter-spacing:-0.390px;">16</span>
<span class="t" style="left:230px;top:662px;font-size:10.5px;color:#555356;transform:translate(-0.20px,-0.49px);letter-spacing:-0.414px;">Design</span>
<span class="t" style="left:490px;top:662px;font-size:10.5px;color:#555356;transform:translate(-0.40px,-0.49px);letter-spacing:-0.359px;">Abrham's Center Project (2020 Q4)</span>
<span class="t" style="left:707px;top:662px;font-size:10.5px;color:#555356;transform:translate(0.35px,-0.49px);letter-spacing:-0.304px;">23-Sep-20</span>
<span class="t" style="left:788px;top:662px;font-size:10.5px;color:#555356;transform:translate(0.35px,-0.49px);letter-spacing:-0.304px;">28-Sep-20</span>
<span class="t" style="left:883px;top:662px;font-size:10.5px;color:#555356;transform:translate(-0.10px,-0.49px);letter-spacing:-0.140px;">0</span>
<span class="t" style="left:891px;top:662px;font-size:10.5px;color:#555356;transform-origin:0 50%;transform:scaleX(0.78);">%</span>
<span class="t" style="left:965px;top:662px;font-size:10.5px;color:#555356;transform:translate(-0.30px,-0.49px);letter-spacing:-0.390px;">32</span>
<span class="t" style="left:230px;top:680px;font-size:10.5px;color:#555356;transform:translate(-0.20px,-0.14px);letter-spacing:-0.280px;">Tender traject</span>
<span class="t" style="left:490px;top:680px;font-size:10.5px;color:#555356;transform:translate(-0.40px,-0.14px);letter-spacing:-0.290px;">Implementatie van veredelings ad...</span>
<span class="t" style="left:707px;top:680px;font-size:10.5px;color:#555356;transform:translate(-0.50px,-0.14px);letter-spacing:-0.115px;">21-Aug-20</span>
<span class="t" style="left:788px;top:680px;font-size:10.5px;color:#555356;transform:translate(-0.50px,-0.14px);letter-spacing:-0.115px;">25-Aug-20</span>
<span class="t" style="left:883px;top:680px;font-size:10.5px;color:#555356;transform:translate(-0.10px,-0.14px);letter-spacing:-0.140px;">0</span>
<span class="t" style="left:891px;top:680px;font-size:10.5px;color:#555356;transform-origin:0 50%;transform:scaleX(0.78);">%</span>
<span class="t" style="left:965px;top:680px;font-size:10.5px;color:#555356;transform:translate(-0.30px,-0.14px);letter-spacing:-0.390px;">24</span>
<span class="t" style="left:230px;top:698px;font-size:10.5px;color:#555356;transform:translate(-0.20px,0.21px);letter-spacing:-0.311px;">Discovery session with vendor</span>
<span class="t" style="left:490px;top:698px;font-size:10.5px;color:#555356;transform:translate(-0.40px,0.21px);letter-spacing:-0.290px;">Implementatie van veredelings ad...</span>
<span class="t" style="left:707px;top:698px;font-size:10.5px;color:#555356;transform:translate(-0.50px,0.21px);letter-spacing:-0.115px;">26-Aug-20</span>
<span class="t" style="left:788px;top:698px;font-size:10.5px;color:#555356;transform:translate(0.35px,0.21px);letter-spacing:-0.304px;">04-Sep-20</span>
<span class="t" style="left:883px;top:698px;font-size:10.5px;color:#555356;transform:translate(-0.10px,0.21px);letter-spacing:-0.140px;">0</span>
<span class="t" style="left:891px;top:698px;font-size:10.5px;color:#555356;transform-origin:0 50%;transform:scaleX(0.78);">%</span>
<span class="t" style="left:965px;top:698px;font-size:10.5px;color:#555356;transform:translate(-0.30px,0.21px);letter-spacing:-0.390px;">64</span>
<span class="t" style="left:230px;top:717px;font-size:10.5px;color:#555356;transform:translate(-0.20px,-0.44px);letter-spacing:-0.218px;">Contracting</span>
<span class="t" style="left:490px;top:717px;font-size:10.5px;color:#555356;transform:translate(-0.40px,-0.44px);letter-spacing:-0.290px;">Implementatie van veredelings ad...</span>
<span class="t" style="left:707px;top:717px;font-size:10.5px;color:#555356;transform:translate(0.35px,-0.44px);letter-spacing:-0.304px;">02-Sep-20</span>
<span class="t" style="left:788px;top:717px;font-size:10.5px;color:#555356;transform:translate(0.35px,-0.44px);letter-spacing:-0.304px;">22-Sep-20</span>
<span class="t" style="left:883px;top:717px;font-size:10.5px;color:#555356;transform:translate(-0.10px,-0.44px);letter-spacing:-0.140px;">0</span>
<span class="t" style="left:891px;top:717px;font-size:10.5px;color:#555356;transform-origin:0 50%;transform:scaleX(0.78);">%</span>
<span class="t" style="left:959px;top:717px;font-size:10.5px;color:#555356;transform:translate(0.10px,-0.44px);letter-spacing:-0.340px;">120</span>
<span class="t" style="left:230px;top:735px;font-size:10.5px;color:#555356;transform:translate(-0.20px,-0.09px);letter-spacing:-0.340px;">Design Thinking session</span>
<span class="t" style="left:490px;top:735px;font-size:10.5px;color:#555356;transform:translate(-0.40px,-0.09px);letter-spacing:-0.290px;">Implementatie van veredelings ad...</span>
<span class="t" style="left:707px;top:735px;font-size:10.5px;color:#555356;transform:translate(0.35px,-0.09px);letter-spacing:-0.304px;">14-Sep-20</span>
<span class="t" style="left:788px;top:735px;font-size:10.5px;color:#555356;transform:translate(0.35px,-0.09px);letter-spacing:-0.304px;">18-Sep-20</span>
<span class="t" style="left:883px;top:735px;font-size:10.5px;color:#555356;letter-spacing:-0.140px;">0</span>
<span class="t" style="left:891px;top:735px;font-size:10.5px;color:#555356;transform-origin:0 50%;transform:scaleX(0.78);">%</span>
<span class="t" style="left:965px;top:735px;font-size:10.5px;color:#555356;transform:translate(-0.30px,-0.09px);letter-spacing:-0.390px;">80</span>
<span class="t" style="left:230px;top:753px;font-size:10.5px;color:#555356;transform:translate(-0.20px,0.26px);letter-spacing:-0.370px;">Hackaton</span>
<span class="t" style="left:490px;top:753px;font-size:10.5px;color:#555356;transform:translate(-0.40px,0.26px);letter-spacing:-0.290px;">Implementatie van veredelings ad...</span>
<span class="t" style="left:707px;top:753px;font-size:10.5px;color:#555356;transform:translate(0.35px,0.26px);letter-spacing:-0.304px;">21-Sep-20</span>
<span class="t" style="left:788px;top:753px;font-size:10.5px;color:#555356;transform:translate(0.35px,0.26px);letter-spacing:-0.304px;">24-Sep-20</span>
<span class="t" style="left:883px;top:753px;font-size:10.5px;color:#555356;transform:translate(-0.10px,0.26px);letter-spacing:-0.140px;">0</span>
<span class="t" style="left:891px;top:753px;font-size:10.5px;color:#555356;transform-origin:0 50%;transform:scaleX(0.78);">%</span>
<span class="t" style="left:965px;top:753px;font-size:10.5px;color:#555356;transform:translate(-0.30px,0.26px);letter-spacing:-0.390px;">32</span>
<span class="t" style="left:230px;top:772px;font-size:10.5px;color:#555356;transform:translate(-0.20px,-0.39px);letter-spacing:-0.343px;">Project Scoping</span>
<span class="t" style="left:490px;top:772px;font-size:10.5px;color:#555356;transform:translate(-0.40px,-0.39px);letter-spacing:-0.348px;">IT Procurement Template</span>
<span class="t" style="left:708px;top:772px;font-size:10.5px;color:#555356;transform:translate(0.25px,-0.39px);letter-spacing:-0.309px;">29-Jun-20</span>
<span class="t" style="left:789px;top:772px;font-size:10.5px;color:#555356;transform:translate(0.25px,-0.39px);letter-spacing:-0.309px;">29-Jun-20</span>
<span class="t" style="left:883px;top:772px;font-size:10.5px;color:#555356;transform:translate(-0.10px,-0.39px);letter-spacing:-0.140px;">0</span>
<span class="t" style="left:891px;top:772px;font-size:10.5px;color:#555356;transform-origin:0 50%;transform:scaleX(0.78);">%</span>
<span class="t" style="left:970px;top:772px;font-size:10.5px;color:#555356;transform:translate(0.30px,-0.39px);letter-spacing:-0.540px;">8</span>
<span class="t" style="left:230px;top:790px;font-size:10.5px;color:#555356;transform:translate(-0.20px,-0.04px);letter-spacing:-0.343px;">Project Scoping</span>
<span class="t" style="left:490px;top:790px;font-size:10.5px;color:#555356;transform:translate(-0.40px,-0.04px);letter-spacing:-0.348px;">IT Procurement Template</span>
<span class="t" style="left:707px;top:790px;font-size:10.5px;color:#555356;transform:translate(0.35px,-0.04px);letter-spacing:-0.304px;">29-Sep-20</span>
<span class="t" style="left:788px;top:790px;font-size:10.5px;color:#555356;transform:translate(0.35px,-0.04px);letter-spacing:-0.304px;">29-Sep-20</span>
<span class="t" style="left:883px;top:790px;font-size:10.5px;color:#555356;letter-spacing:-0.140px;">0</span>
<span class="t" style="left:891px;top:790px;font-size:10.5px;color:#555356;transform-origin:0 50%;transform:scaleX(0.78);">%</span>
<span class="t" style="left:970px;top:790px;font-size:10.5px;color:#555356;transform:translate(0.30px,-0.04px);letter-spacing:-0.540px;">8</span>
<span class="t" style="left:230px;top:808px;font-size:10.5px;color:#555356;transform:translate(-0.20px,0.31px);letter-spacing:-0.393px;">Re-leveling</span>
<span class="t" style="left:490px;top:808px;font-size:10.5px;color:#555356;transform:translate(-0.40px,0.31px);letter-spacing:-0.290px;">North Carolina - Branch 240</span>
<span class="t" style="left:707px;top:808px;font-size:10.5px;color:#555356;transform:translate(0.35px,0.31px);letter-spacing:-0.304px;">08-Sep-20</span>
<span class="t" style="left:788px;top:808px;font-size:10.5px;color:#555356;transform:translate(0.35px,0.31px);letter-spacing:-0.304px;">10-Sep-20</span>
<span class="t" style="left:883px;top:808px;font-size:10.5px;color:#555356;transform:translate(-0.10px,0.31px);letter-spacing:-0.140px;">0</span>
<span class="t" style="left:891px;top:808px;font-size:10.5px;color:#555356;transform-origin:0 50%;transform:scaleX(0.78);">%</span>
<span class="t" style="left:965px;top:808px;font-size:10.5px;color:#555356;transform:translate(-0.30px,0.31px);letter-spacing:-0.390px;">24</span>
<span class="t" style="left:230px;top:827px;font-size:10.5px;color:#555356;transform:translate(-0.20px,-0.34px);letter-spacing:-0.439px;">Install Parts E-H</span>
<span class="t" style="left:490px;top:827px;font-size:10.5px;color:#555356;transform:translate(-0.40px,-0.34px);letter-spacing:-0.290px;">North Carolina - Branch 240</span>
<span class="t" style="left:707px;top:827px;font-size:10.5px;color:#555356;transform:translate(0.35px,-0.34px);letter-spacing:-0.304px;">21-Sep-20</span>
<span class="t" style="left:788px;top:827px;font-size:10.5px;color:#555356;transform:translate(0.35px,-0.34px);letter-spacing:-0.304px;">23-Sep-20</span>
<span class="t" style="left:883px;top:827px;font-size:10.5px;color:#555356;transform:translate(-0.10px,-0.34px);letter-spacing:-0.140px;">0</span>
<span class="t" style="left:891px;top:827px;font-size:10.5px;color:#555356;transform-origin:0 50%;transform:scaleX(0.78);">%</span>
<span class="t" style="left:965px;top:827px;font-size:10.5px;color:#555356;transform:translate(-0.30px,-0.34px);letter-spacing:-0.390px;">24</span>
<svg class="r" style="left:0px;top:0px;" width="1100" height="838" viewBox="0 0 1100 838"><path d="M209.5,642.30 l6.1,6 l-6.1,6 l-6.1,-6 Z" fill="#fb7f65" stroke="#f4755b" stroke-width="1" stroke-linejoin="round"/><path d="M209.5,660.65 l6.1,6 l-6.1,6 l-6.1,-6 Z" fill="#fb7f65" stroke="#f4755b" stroke-width="1" stroke-linejoin="round"/><path d="M209.5,679.00 l6.1,6 l-6.1,6 l-6.1,-6 Z" fill="#fb7f65" stroke="#f4755b" stroke-width="1" stroke-linejoin="round"/><path d="M209.5,697.35 l6.1,6 l-6.1,6 l-6.1,-6 Z" fill="#fb7f65" stroke="#f4755b" stroke-width="1" stroke-linejoin="round"/><path d="M209.5,715.70 l6.1,6 l-6.1,6 l-6.1,-6 Z" fill="#fb7f65" stroke="#f4755b" stroke-width="1" stroke-linejoin="round"/><path d="M209.5,734.05 l6.1,6 l-6.1,6 l-6.1,-6 Z" fill="#fb7f65" stroke="#f4755b" stroke-width="1" stroke-linejoin="round"/><path d="M209.5,752.40 l6.1,6 l-6.1,6 l-6.1,-6 Z" fill="#fb7f65" stroke="#f4755b" stroke-width="1" stroke-linejoin="round"/><path d="M209.5,770.75 l6.1,6 l-6.1,6 l-6.1,-6 Z" fill="#fb7f65" stroke="#f4755b" stroke-width="1" stroke-linejoin="round"/><path d="M209.5,789.10 l6.1,6 l-6.1,6 l-6.1,-6 Z" fill="#fb7f65" stroke="#f4755b" stroke-width="1" stroke-linejoin="round"/><path d="M209.5,807.45 l6.1,6 l-6.1,6 l-6.1,-6 Z" fill="#fb7f65" stroke="#f4755b" stroke-width="1" stroke-linejoin="round"/><path d="M209.5,825.80 l6.1,6 l-6.1,6 l-6.1,-6 Z" fill="#fb7f65" stroke="#f4755b" stroke-width="1" stroke-linejoin="round"/><g transform="translate(669.8,647.40)" fill="none" stroke="#87858a" stroke-width="1"><ellipse cx="-1.9" cy="-2.1" rx="2.9" ry="2.1" transform="rotate(18 -1.9 -2.1)"/><ellipse cx="1.8" cy="0.8" rx="3.3" ry="2.3" transform="rotate(18 1.8 0.8)"/></g><g transform="translate(669.8,665.75)" fill="none" stroke="#87858a" stroke-width="1"><ellipse cx="-1.9" cy="-2.1" rx="2.9" ry="2.1" transform="rotate(18 -1.9 -2.1)"/><ellipse cx="1.8" cy="0.8" rx="3.3" ry="2.3" transform="rotate(18 1.8 0.8)"/></g><g transform="translate(669.8,684.10)" fill="none" stroke="#87858a" stroke-width="1"><ellipse cx="-1.9" cy="-2.1" rx="2.9" ry="2.1" transform="rotate(18 -1.9 -2.1)"/><ellipse cx="1.8" cy="0.8" rx="3.3" ry="2.3" transform="rotate(18 1.8 0.8)"/></g><g transform="translate(669.8,702.45)" fill="none" stroke="#87858a" stroke-width="1"><ellipse cx="-1.9" cy="-2.1" rx="2.9" ry="2.1" transform="rotate(18 -1.9 -2.1)"/><ellipse cx="1.8" cy="0.8" rx="3.3" ry="2.3" transform="rotate(18 1.8 0.8)"/></g><g transform="translate(669.8,720.80)" fill="none" stroke="#87858a" stroke-width="1"><ellipse cx="-1.9" cy="-2.1" rx="2.9" ry="2.1" transform="rotate(18 -1.9 -2.1)"/><ellipse cx="1.8" cy="0.8" rx="3.3" ry="2.3" transform="rotate(18 1.8 0.8)"/></g><g transform="translate(669.8,739.15)" fill="none" stroke="#87858a" stroke-width="1"><ellipse cx="-1.9" cy="-2.1" rx="2.9" ry="2.1" transform="rotate(18 -1.9 -2.1)"/><ellipse cx="1.8" cy="0.8" rx="3.3" ry="2.3" transform="rotate(18 1.8 0.8)"/></g><g transform="translate(669.8,757.50)" fill="none" stroke="#87858a" stroke-width="1"><ellipse cx="-1.9" cy="-2.1" rx="2.9" ry="2.1" transform="rotate(18 -1.9 -2.1)"/><ellipse cx="1.8" cy="0.8" rx="3.3" ry="2.3" transform="rotate(18 1.8 0.8)"/></g><g transform="translate(669.8,775.85)" fill="none" stroke="#87858a" stroke-width="1"><ellipse cx="-1.9" cy="-2.1" rx="2.9" ry="2.1" transform="rotate(18 -1.9 -2.1)"/><ellipse cx="1.8" cy="0.8" rx="3.3" ry="2.3" transform="rotate(18 1.8 0.8)"/></g><g transform="translate(669.8,794.20)" fill="none" stroke="#87858a" stroke-width="1"><ellipse cx="-1.9" cy="-2.1" rx="2.9" ry="2.1" transform="rotate(18 -1.9 -2.1)"/><ellipse cx="1.8" cy="0.8" rx="3.3" ry="2.3" transform="rotate(18 1.8 0.8)"/></g><g transform="translate(669.8,812.55)" fill="none" stroke="#87858a" stroke-width="1"><ellipse cx="-1.9" cy="-2.1" rx="2.9" ry="2.1" transform="rotate(18 -1.9 -2.1)"/><ellipse cx="1.8" cy="0.8" rx="3.3" ry="2.3" transform="rotate(18 1.8 0.8)"/></g><g transform="translate(669.8,830.90)" fill="none" stroke="#87858a" stroke-width="1"><ellipse cx="-1.9" cy="-2.1" rx="2.9" ry="2.1" transform="rotate(18 -1.9 -2.1)"/><ellipse cx="1.8" cy="0.8" rx="3.3" ry="2.3" transform="rotate(18 1.8 0.8)"/></g></svg>
<div class="r" style="left:0px;top:838.3px;width:1600px;height:62px;background:#ffffff;"></div>
<div class="r" style="left:0px;top:837.2px;width:1600px;height:1.1px;background:#8b898c;"></div>
</div>
</body></html>
